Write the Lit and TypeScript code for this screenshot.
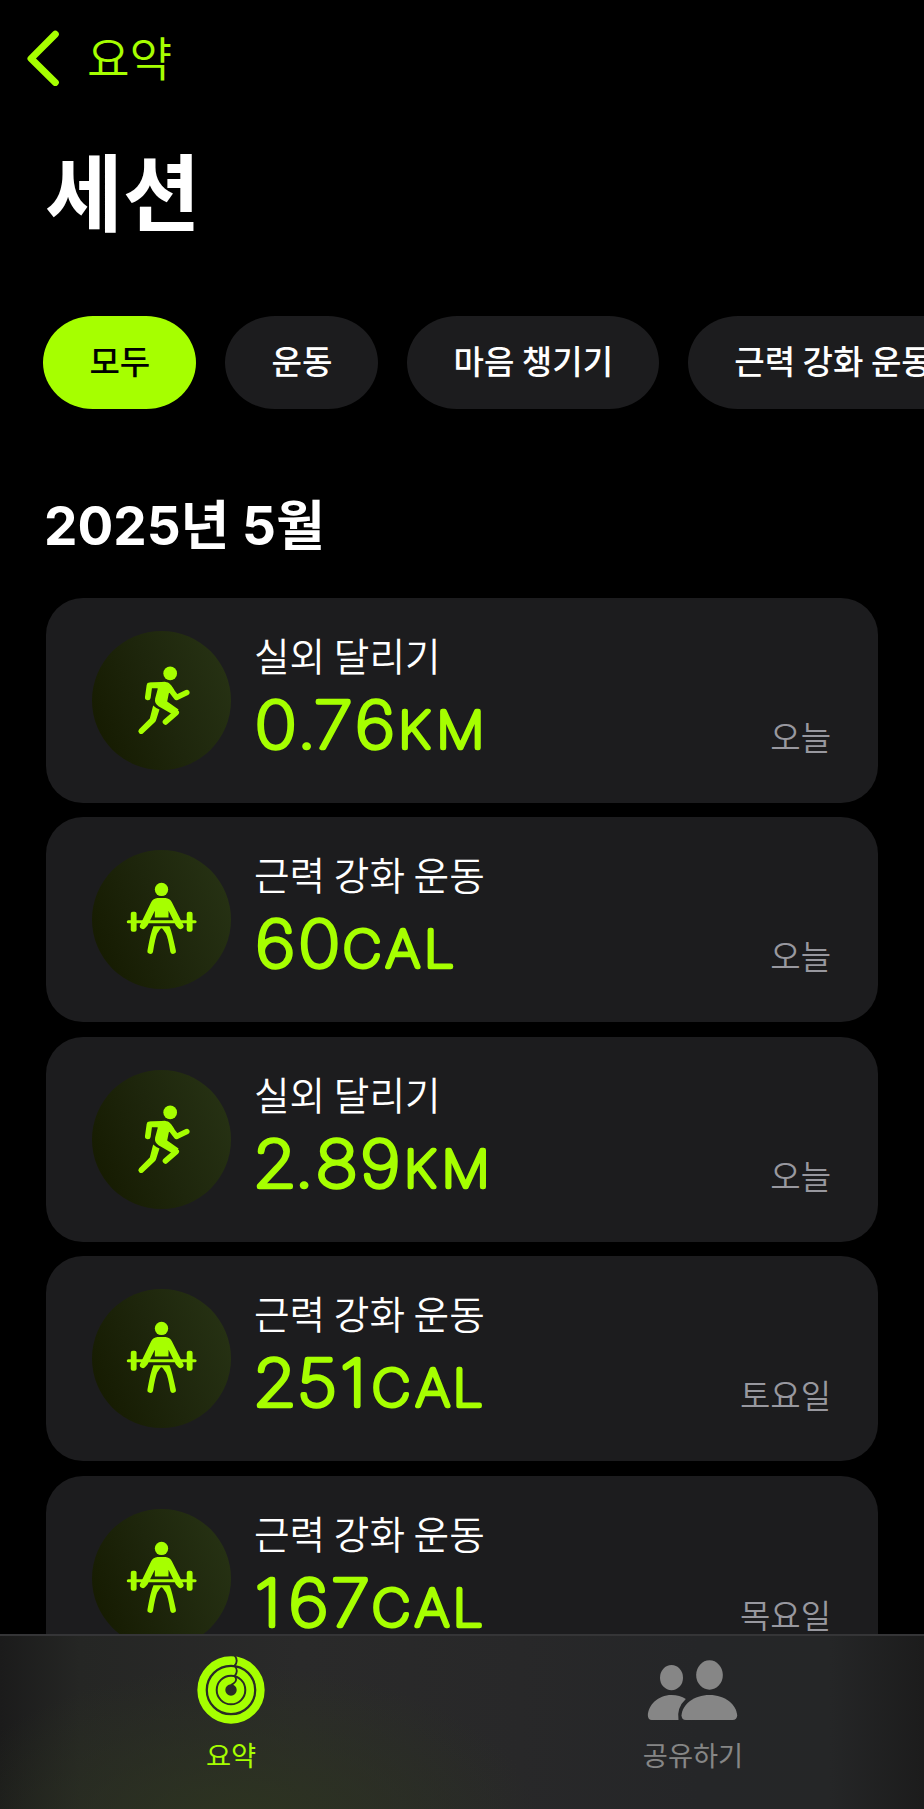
import { LitElement, html, svg, css } from "lit";

interface Metric { text: string; xs: number[]; }
interface Workout { kind: "run" | "lift"; name: string; value: Metric; unit: Metric; day: string; }

const workouts: Workout[] = [
  { kind: "run", name: "실외 달리기", value: { text: "0.76", xs: [0.8, 39, 54.4, 91.8] }, unit: { text: "KM", xs: [136.2, 172.2] }, day: "오늘" },
  { kind: "lift", name: "근력 강화 운동", value: { text: "60", xs: [1.2, 40.2] }, unit: { text: "CAL", xs: [83.8, 124.4, 160.3] }, day: "오늘" },
  { kind: "run", name: "실외 달리기", value: { text: "2.89", xs: [-1.1, 36.9, 55.8, 96.5] }, unit: { text: "KM", xs: [141.5, 177.1] }, day: "오늘" },
  { kind: "lift", name: "근력 강화 운동", value: { text: "251", xs: [-1.1, 39.1, 78.3] }, unit: { text: "CAL", xs: [111.1, 152.7, 187.4] }, day: "토요일" },
  { kind: "lift", name: "근력 강화 운동", value: { text: "167", xs: [0.8, 31.4, 70.1] }, unit: { text: "CAL", xs: [111.1, 152, 187.4] }, day: "목요일" },
];

const runner = svg`
  <circle cx="271" cy="158" r="20.5"/>
  <path d="M204 230 L209 194 H250" fill="none" stroke="currentColor" stroke-width="17" stroke-linecap="round" stroke-linejoin="round"/>
  <path d="M262 194 L290 230 L321 215" fill="none" stroke="currentColor" stroke-width="16" stroke-linecap="round" stroke-linejoin="round"/>
  <path d="M210 186 L255 183 Q267 184 274 193 L284 208 L267 217 L262 242 L296 266 L284 284 L236 256 Q223 247 226 233 L234 203 Z"/>
  <path d="M250 250 L289 275 L257 303" fill="none" stroke="currentColor" stroke-width="17" stroke-linecap="round" stroke-linejoin="round"/>
  <path d="M220 254 Q228 262 239 266 L229 297 Q228 301 225 304 L190 337 A8.5 8.5 0 0 1 178 325 L210 293 Z"/>`;

const lifter = svg`
  <circle cx="245" cy="149" r="20"/>
  <path d="M233 175 H257 Q270 176 276 187 L309 253 A8.5 8.5 0 0 1 294 264 L288 257 L266 213 V233 H225 V213 L203 257 L197 264 A8.5 8.5 0 0 1 182 253 L214 187 Q220 176 233 175 Z"/>
  <rect x="141" y="241.5" width="209" height="9" rx="4.5"/>
  <rect x="153" y="216" width="17.5" height="60" rx="6"/>
  <rect x="320.5" y="216" width="17.5" height="60" rx="6"/>
  <path d="M221 259 H269 Q276 275 288 332 A8.5 8.5 0 0 1 271.5 336 Q264 291 258 281 L248 267 Q245 263 242 267 L232 281 Q226 295 219.5 336 A8.5 8.5 0 0 1 203 332 Q212 279 221 259 Z"/>`;

class WorkoutCard extends LitElement {
  static properties = { workout: { attribute: false } };
  declare workout: Workout;
  static styles = css`
    :host { display: flex; flex: none; box-sizing: border-box; height: 205px; padding: 33px 47px 0 46px; border-radius: 37px; background: #1c1c1e; }
    .badge { flex: none; width: 139px; height: 139px; border-radius: 50%; background: linear-gradient(68deg, #151a00 5%, #1e260c 50%, #283415 100%); color: #a6ff00; }
    .badge svg { display: block; width: 139px; height: 139px; fill: currentColor; }
    .info { flex: 1; padding-left: 23px; }
    .name { color: #fff; font-size: 38.7px; font-weight: 350; line-height: 46px; height: 46px; white-space: nowrap; }
    .metric { display: block; width: 300px; height: 80px; overflow: visible; }
    .metric text { font-family: Inter, sans-serif; font-weight: 100; fill: #a6ff00; stroke: #a6ff00; stroke-width: 4.6; stroke-linejoin: round; }
    .big { font-size: 64.5px; transform: scale(1.1, 1); }
    .unit { font-size: 50.5px; transform: scale(1.06, 1); }
    .day { color: #98989f; font-size: 33px; font-weight: 350; line-height: 40px; padding-top: 85px; white-space: nowrap; }
  `;
  render() {
    const w = this.workout;
    return html`
      <div class="badge"><svg viewBox="37 31 416 416">${w.kind === "run" ? runner : lifter}</svg></div>
      <div class="info">
        <div class="name">${w.name}</div>
        <svg class="metric">
          <text class="big" y="71.5" x=${w.value.xs.join(" ")}>${w.value.text}</text>
          <text class="unit" y="71.5" x=${w.unit.xs.join(" ")}>${w.unit.text}</text>
        </svg>
      </div>
      <div class="day">${w.day}</div>`;
  }
}
customElements.define("workout-card", WorkoutCard);

class AppRoot extends LitElement {
  static styles = css`
    :host { display: flex; flex-direction: column; width: 924px; height: 1809px; overflow: hidden; background: #000; color: #fff; font-family: "Noto Sans CJK KR", sans-serif; }
    .content { flex: 1; min-height: 0; overflow: hidden; display: flex; flex-direction: column; }
    .content > * { flex: none; }
    .back { display: flex; align-items: center; height: 116px; padding-left: 26.5px; color: #a6ff00; font-size: 46.3px; font-weight: 350; line-height: 60px; }
    .back svg { display: block; margin-right: 28.5px; }
    .back span { padding-bottom: 5px; }
    h1 { margin: 0; height: 168px; line-height: 145px; padding-left: 45px; font-size: 84.5px; font-weight: 700; }
    .chips { display: flex; gap: 29px; margin: 32px 0 0 43.3px; }
    .chip { flex: none; height: 93px; line-height: 89px; box-sizing: border-box; padding: 0 46.1px; border-radius: 50px / 46.5px; background: #1c1c1e; font-size: 33.1px; font-weight: 500; white-space: nowrap; }
    .on { background: #a6ff00; color: #000; }
    h2 { margin: 84px 0 0 44px; height: 105px; line-height: 66px; font-family: Inter, "Noto Sans CJK KR", sans-serif; font-size: 53.1px; font-weight: 700; }
    .list { display: flex; flex-direction: column; gap: 14.4px; padding: 0 46px; }
    .tabs { flex: none; display: grid; grid-template-columns: 1fr 1fr; height: 175px; box-sizing: border-box; border-top: 2px solid #353537;
      background: radial-gradient(ellipse 300px 160px at 240px 190px, #2d3420 0%, #2d342000 100%), linear-gradient(90deg, #1b1b1b 0, #252624 80px, #2a2a2a 300px, #282829 520px, #252628 700px, #252627 830px, #1c1c1c 924px); }
    .tab { display: flex; flex-direction: column; align-items: center; font-size: 27.3px; line-height: 36px; color: #868686; }
    .tab.active { color: #a6ff00; }
    .tab svg { display: block; height: 78px; margin: 14.5px 0 7px; fill: currentColor; }
  `;
  render() {
    return html`
      <main class="content">
        <nav class="back">
          <svg width="32" height="56" viewBox="0 0 32 56"><path d="M28.3 4.2 L4 28.6 L28.3 52.6" fill="none" stroke="currentColor" stroke-width="7" stroke-linecap="round" stroke-linejoin="round"/></svg>
          <span>요약</span>
        </nav>
        <h1>세션</h1>
        <div class="chips">
          <div class="chip on">모두</div><div class="chip">운동</div><div class="chip">마음 챙기기</div><div class="chip">근력 강화 운동</div>
        </div>
        <h2>2025년 5월</h2>
        <div class="list">${workouts.map(w => html`<workout-card .workout=${w}></workout-card>`)}</div>
      </main>
      <nav class="tabs">
        <div class="tab active">
          <svg width="78" viewBox="-39 -39 78 78">
            <mask id="cut"><rect x="-39" y="-39" width="78" height="78" fill="#fff"/>
              <path d="M3.2 -35 Q8 -29.5 3.6 -24.3 Q8 -19 3.6 -14 Q7 -9.5 2.5 -6.5 Q1 -5.5 0 -5" fill="none" stroke="#000" stroke-width="1.8"/></mask>
            <g mask="url(#cut)" fill="none" stroke="currentColor"><circle r="29.5" stroke-width="8.3"/><circle r="19.2" stroke-width="7.8"/><circle r="9.5" stroke-width="7.6"/></g>
          </svg>
          <span>요약</span>
        </div>
        <div class="tab">
          <svg width="92" viewBox="52 30 275 234">
            <ellipse cx="125" cy="110" rx="34.5" ry="38"/><ellipse cx="239" cy="102" rx="40" ry="44"/>
            <path d="M168 237 H308 Q322 237 322 223 C319 190 286 162 239 162 C192 162 158 190 155 223 Q155 237 168 237 Z"/>
            <path d="M66 237 H146 Q140 200 168 174 Q150 162 125 162 C84 162 56 192 54 223 Q54 237 66 237 Z"/>
          </svg>
          <span>공유하기</span>
        </div>
      </nav>`;
  }
}
customElements.define("app-root", AppRoot);
